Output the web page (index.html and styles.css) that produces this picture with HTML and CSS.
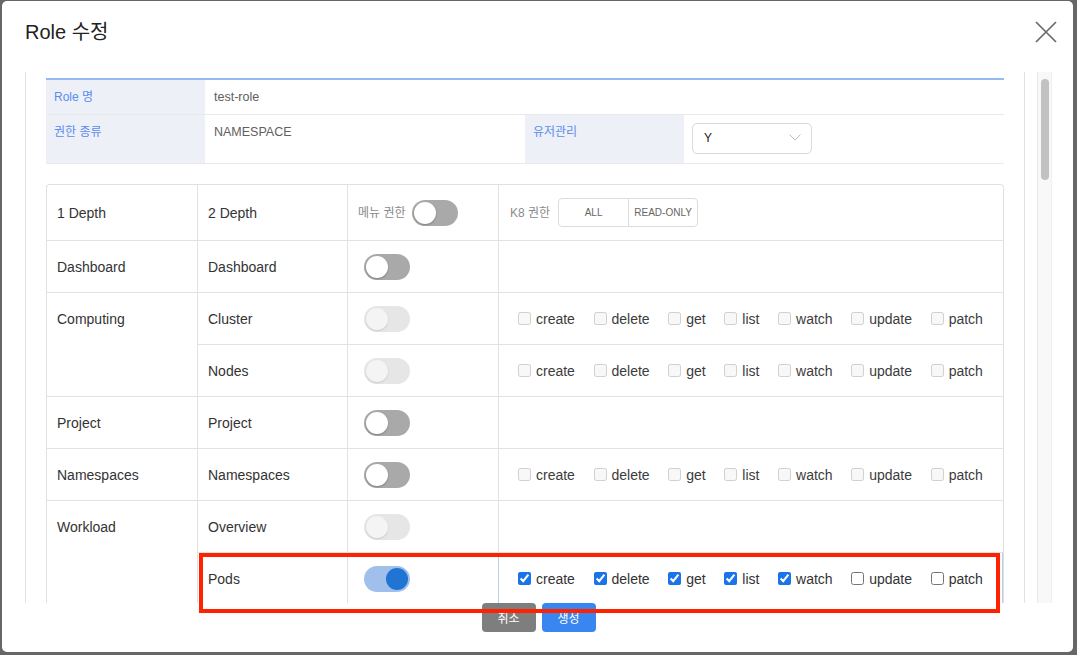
FILE: index.html
```html
<!DOCTYPE html>
<html lang="ko">
<head>
<meta charset="utf-8">
<title>Role 수정</title>
<link rel="stylesheet" href="styles.css">
</head>
<body>
<div class="modal">
  <div class="modal-header">
    <h2 class="modal-title">Role 수정</h2>
    <button class="close-btn" aria-label="닫기">
      <svg width="22" height="22" viewBox="0 0 22 22"><path d="M1 1L21 21M21 1L1 21" stroke="#6a6a6a" stroke-width="1.7" fill="none"/></svg>
    </button>
  </div>
  <div class="modal-body">
    <div class="scroll-content">
      <div class="info-table">
        <div class="info-label">Role 명</div>
        <div class="info-value wide">test-role</div>
        <div class="info-label tall">권한 종류</div>
        <div class="info-value tall">NAMESPACE</div>
        <div class="info-label tall">유저관리</div>
        <div class="info-value tall select-cell">
          <div class="select"><span>Y</span>
            <svg width="12" height="7" viewBox="0 0 12 7"><path d="M0.5 0.5L6 6L11.5 0.5" stroke="#bdbdbd" stroke-width="1" fill="none"/></svg>
          </div>
        </div>
      </div>

      <div class="perm-table">
        <div class="cell">1 Depth</div>
        <div class="cell">2 Depth</div>
        <div class="cell toggle-head"><span class="muted">메뉴 권한</span><span class="toggle off"></span></div>
        <div class="cell last k8-head"><span class="muted">K8 권한</span>
          <div class="seg"><span>ALL</span><span>READ-ONLY</span></div>
        </div>

        <div class="cell">Dashboard</div>
        <div class="cell">Dashboard</div>
        <div class="cell tcell"><span class="toggle off"></span></div>
        <div class="cell last"></div>

        <div class="cell span2">Computing</div>
        <div class="cell">Cluster</div>
        <div class="cell tcell"><span class="toggle disabled"></span></div>
        <div class="cell last checks">
          <label class="chk"><input type="checkbox" disabled>create</label>
          <label class="chk"><input type="checkbox" disabled>delete</label>
          <label class="chk"><input type="checkbox" disabled>get</label>
          <label class="chk"><input type="checkbox" disabled>list</label>
          <label class="chk"><input type="checkbox" disabled>watch</label>
          <label class="chk"><input type="checkbox" disabled>update</label>
          <label class="chk"><input type="checkbox" disabled>patch</label>
        </div>
        <div class="cell">Nodes</div>
        <div class="cell tcell"><span class="toggle disabled"></span></div>
        <div class="cell last checks">
          <label class="chk"><input type="checkbox" disabled>create</label>
          <label class="chk"><input type="checkbox" disabled>delete</label>
          <label class="chk"><input type="checkbox" disabled>get</label>
          <label class="chk"><input type="checkbox" disabled>list</label>
          <label class="chk"><input type="checkbox" disabled>watch</label>
          <label class="chk"><input type="checkbox" disabled>update</label>
          <label class="chk"><input type="checkbox" disabled>patch</label>
        </div>

        <div class="cell">Project</div>
        <div class="cell">Project</div>
        <div class="cell tcell"><span class="toggle off"></span></div>
        <div class="cell last"></div>

        <div class="cell">Namespaces</div>
        <div class="cell">Namespaces</div>
        <div class="cell tcell"><span class="toggle off"></span></div>
        <div class="cell last checks">
          <label class="chk"><input type="checkbox" disabled>create</label>
          <label class="chk"><input type="checkbox" disabled>delete</label>
          <label class="chk"><input type="checkbox" disabled>get</label>
          <label class="chk"><input type="checkbox" disabled>list</label>
          <label class="chk"><input type="checkbox" disabled>watch</label>
          <label class="chk"><input type="checkbox" disabled>update</label>
          <label class="chk"><input type="checkbox" disabled>patch</label>
        </div>

        <div class="cell span2">Workload</div>
        <div class="cell">Overview</div>
        <div class="cell tcell"><span class="toggle disabled"></span></div>
        <div class="cell last"></div>
        <div class="cell">Pods</div>
        <div class="cell tcell hl"><span class="toggle on"></span></div>
        <div class="cell last checks hl">
          <label class="chk"><input type="checkbox" checked>create</label>
          <label class="chk"><input type="checkbox" checked>delete</label>
          <label class="chk"><input type="checkbox" checked>get</label>
          <label class="chk"><input type="checkbox" checked>list</label>
          <label class="chk"><input type="checkbox" checked>watch</label>
          <label class="chk"><input type="checkbox">update</label>
          <label class="chk"><input type="checkbox">patch</label>
        </div>
      </div>
    </div>
    <div class="scrollbar"><div class="thumb"></div></div>
  </div>
  <div class="modal-footer">
    <button class="btn btn-cancel">취소</button>
    <button class="btn btn-create">생성</button>
  </div>
</div>
<div class="annotation"></div>
</body>
</html>
```

FILE: styles.css
```css
* { box-sizing: border-box; }

html, body {
  margin: 0;
  height: 100%;
}

body {
  background: #676767;
  padding: 1px 0 0 2px;
  font-family: "Liberation Sans", "Noto Sans CJK KR", sans-serif;
  color: #333;
  overflow: hidden;
}

.modal {
  width: 1071px;
  height: 651px;
  background: #fff;
  border-radius: 5px;
  display: flex;
  flex-direction: column;
}

.modal-header {
  height: 71px;
  display: flex;
  justify-content: space-between;
  align-items: flex-start;
  padding: 19px 16px 0 23px;
}

.modal-title {
  margin: 0;
  font-size: 20px;
  line-height: 24px;
  font-weight: 400;
  color: #222;
  font-family: "Liberation Sans", "Noto Sans CJK KR", sans-serif;
}

.close-btn {
  border: 0;
  background: none;
  padding: 0;
  margin-top: 1px;
  width: 22px;
  height: 22px;
  cursor: pointer;
}
.close-btn svg { display: block; }

.modal-body {
  height: 531px;
  margin: 0 21px 0 23px;
  display: flex;
}

.scroll-content {
  width: 1000px;
  height: 531px;
  overflow: hidden;
  border-left: 1px solid #e2e2e2;
  border-right: 1px solid #e2e2e2;
  padding: 6px 20px 0 20px;
}

.scrollbar {
  width: 15px;
  margin-left: 12px;
  height: 531px;
  background: #f8f8f8;
  border-left: 1px solid #e8e8e8;
  border-right: 1px solid #f0f0f0;
  padding: 7px 0 0 3px;
}
.thumb {
  width: 8px;
  height: 101px;
  border-radius: 4px;
  background: #c2c2c2;
}

/* info table */
.info-table {
  display: grid;
  grid-template-columns: 159px 320px 159px 320px;
  border-top: 2px solid #93bbf2;
  font-size: 12px;
  line-height: 15px;
}
.info-label, .info-value {
  border-bottom: 1px solid #e9e9e9;
  height: 35px;
  padding: 10px 8px 0;
}
.info-label {
  background: #edf0f7;
  color: #5b8def;
}
.info-value {
  color: #606060;
  padding-left: 9px;
  font-size: 12.5px;
}
.info-value.wide { grid-column: span 3; }
.info-label.tall, .info-value.tall { height: 49px; }
.select-cell { padding: 8px 8px 0; }
.select {
  width: 120px;
  height: 31px;
  border: 1px solid #d9d9d9;
  border-radius: 5px;
  display: flex;
  align-items: center;
  justify-content: space-between;
  padding: 0 10px 0 11px;
  color: #222;
  font-size: 12px;
}
.select svg { display: block; margin-top: -2px; }

/* permission table */
.perm-table {
  margin-top: 20px;
  border: 1px solid #e0e0e0;
  border-bottom: 0;
  border-radius: 4px 4px 0 0;
  display: grid;
  grid-template-columns: 151px 150px 151px 1fr;
  grid-template-rows: 56px repeat(7, 52px);
  font-size: 14px;
  line-height: 18px;
}
.cell {
  border-right: 1px solid #e2e2e2;
  border-bottom: 1px solid #e2e2e2;
  padding: 0 10px;
  display: flex;
  align-items: center;
}
.cell.last { border-right: 0; }
.cell.span2 {
  grid-row: span 2;
  align-items: flex-start;
  padding-top: 17px;
}
.muted {
  color: #8a8a8a;
  font-size: 12px;
}
.toggle-head { gap: 6px; }
.k8-head { padding-left: 11px; }

.seg {
  margin-left: 8px;
  display: flex;
  height: 29px;
  border: 1px solid #dcdcdc;
  border-radius: 4px;
  font-size: 10px;
  color: #666;
}
.seg span {
  width: 69px;
  display: flex;
  align-items: center;
  justify-content: center;
}
.seg span + span { border-left: 1px solid #dcdcdc; }

.tcell { padding-left: 16px; }
.toggle {
  position: relative;
  display: inline-block;
  width: 46px;
  height: 26px;
  border-radius: 13px;
  flex: none;
}
.toggle::after {
  content: "";
  position: absolute;
  top: 2px;
  left: 2px;
  width: 22px;
  height: 22px;
  border-radius: 50%;
  background: #fff;
  box-shadow: 0 1px 2px rgba(0,0,0,0.25);
}
.toggle.off { background: #a9a9a9; }
.toggle.disabled { background: #e6e6e6; }
.toggle.disabled::after { background: #f4f4f4; box-shadow: 0 1px 2px rgba(0,0,0,0.12); }
.toggle.on { background: #a0bfea; }
.toggle.on::after { left: 22px; background: #1f74d4; box-shadow: none; }

.checks {
  padding-left: 19px;
  gap: 18.6px;
}
.chk {
  display: inline-flex;
  align-items: center;
  gap: 5px;
  color: #333;
  white-space: nowrap;
}
.chk input {
  margin: 0;
  width: 13px;
  height: 13px;
  accent-color: #1a73e8;
}
.chk:has(input:disabled) { color: #3c3c3c; }

.cell.hl { border-right-color: #b9cdee; }
.cell.last.hl { box-shadow: inset -1px 0 0 #b9cdee; }

/* footer */
.modal-footer {
  height: 49px;
  display: flex;
  justify-content: center;
  gap: 6px;
  padding-left: 2px;
}
.btn {
  width: 54px;
  height: 29px;
  border: 0;
  border-radius: 4px;
  color: #fff;
  font-size: 12px;
  font-family: "Noto Sans CJK KR", sans-serif;
  padding: 0;
}
.btn-cancel { background: #7e7e7e; }
.btn-create { background: #3a86f0; }

/* screenshot annotation */
.annotation {
  position: absolute;
  left: 199px;
  top: 553px;
  width: 801px;
  height: 60px;
  border: 4px solid #ff2200;
  pointer-events: none;
}
```
